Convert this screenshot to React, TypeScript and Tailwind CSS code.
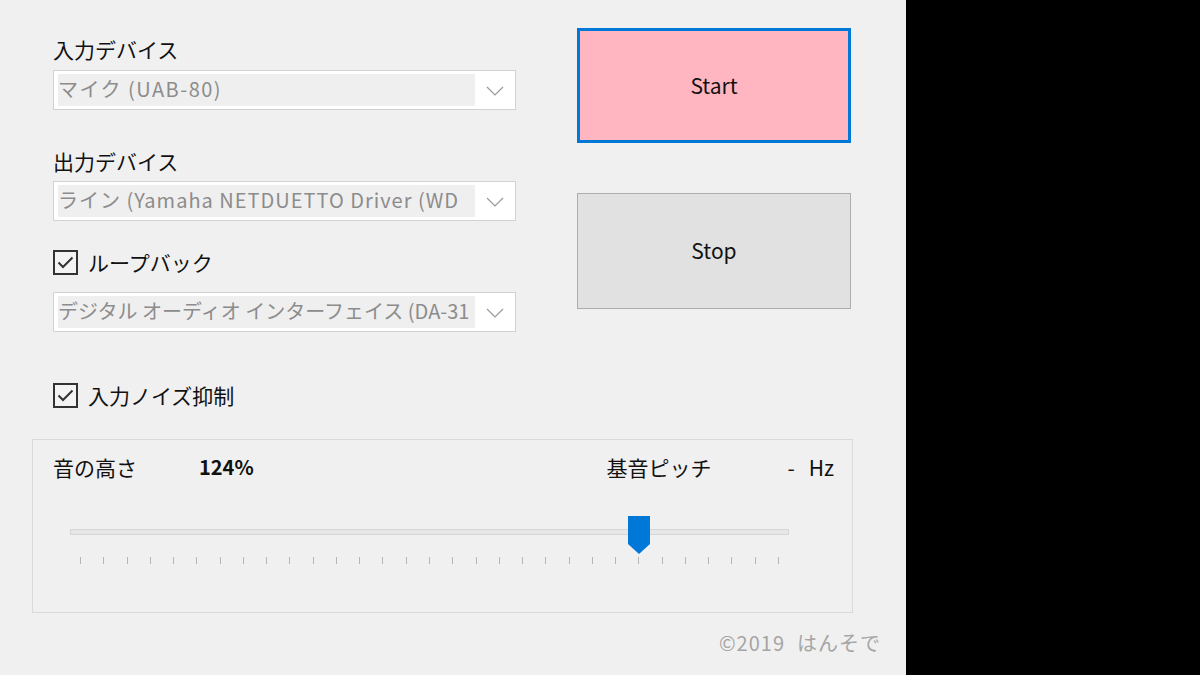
import React from 'react';

const FONT = '"Noto Sans CJK JP", "Liberation Sans", sans-serif';

function Chevron() {
  return (
    <svg width="18" height="10" viewBox="0 0 18 10">
      <polyline points="1,1 9,9 17,1" fill="none" stroke="#9a9a9a" strokeWidth="1.2" />
    </svg>
  );
}

function Combo({ value, track = 'tracking-[1.5px]' }: { value: string; track?: string }) {
  return (
    <div className="h-[40px] w-[463px] flex items-center bg-white border border-[#d2d2d2] pl-[4px]">
      <div className={`h-[32px] w-[417px] bg-[#efefef] whitespace-nowrap flex items-center pb-[2px] text-[20px] ${track} text-[#8c8c8c] leading-none`}>
        {value}
      </div>
      <div className="flex-1 flex justify-center items-center pt-[2px]">
        <Chevron />
      </div>
    </div>
  );
}

function CheckRow({ label }: { label: string }) {
  return (
    <div className="h-[30px] flex items-center gap-[10px]">
      <div className="w-[25px] h-[25px] border-[2px] border-[#333333] bg-[#f4f4f4] flex items-center justify-center">
        <svg width="17" height="13" viewBox="0 0 17 13">
          <polyline points="1.5,6.5 6,11 15.5,1.5" fill="none" stroke="#333333" strokeWidth="2" />
        </svg>
      </div>
      <span className="text-[21px] text-[#111111] leading-none">{label}</span>
    </div>
  );
}

function Slider() {
  const ticks = Array.from({ length: 31 }, (_, i) => i);
  return (
    <div className="relative ml-[37px] w-[719px] h-[50px]">
      <div className="absolute left-0 right-0 top-[13px] h-[6px] bg-[#e7e7e7] border border-[#d6d6d6]" />
      <div className="absolute top-[41px] left-0 right-0 px-[10px] flex justify-between">
        {ticks.map((t) => (
          <div key={t} className="w-px h-[7px] bg-[#b5b5b5]" />
        ))}
      </div>
      <svg className="absolute top-0 left-[558px]" width="22" height="38" viewBox="0 0 22 38">
        <polygon points="0,0 22,0 22,28 11,38 0,28" fill="#0078d7" />
      </svg>
    </div>
  );
}

export default function App() {
  return (
    <div className="w-[1200px] h-[675px] flex bg-black overflow-hidden" style={{ fontFamily: FONT }}>
      <div className="w-[906px] h-full bg-[#f0f0f0] flex flex-col">
        {/* Top area */}
        <div className="flex items-start">
          <div className="ml-[53px] w-[463px] pt-[34px] flex flex-col">
            <div className="h-[30px] flex items-center text-[21px] text-[#111111] leading-none">入力デバイス</div>
            <div className="mt-[6px]">
              <Combo value="マイク (UAB-80)" />
            </div>
            <div className="mt-[36px] h-[30px] flex items-center text-[21px] text-[#111111] leading-none">出力デバイス</div>
            <div className="mt-[5px]">
              <Combo value="ライン (Yamaha NETDUETTO Driver (WD" track="tracking-[1px]" />
            </div>
            <div className="mt-[26px]">
              <CheckRow label="ループバック" />
            </div>
            <div className="mt-[15px]">
              <Combo value="デジタル オーディオ インターフェイス (DA-31" track="tracking-[0px]" />
            </div>
            <div className="mt-[48px]">
              <CheckRow label="入力ノイズ抑制" />
            </div>
          </div>

          <div className="ml-[61px] pt-[28px] flex flex-col">
            <button className="w-[274px] h-[115px] bg-[#ffb6c1] border-[3px] border-[#0078d7] text-[21px] text-[#111111]">
              Start
            </button>
            <button className="mt-[50px] w-[274px] h-[116px] bg-[#e1e1e1] border border-[#adadad] text-[21px] text-[#111111]">
              Stop
            </button>
          </div>
        </div>

        {/* Pitch group */}
        <div className="mt-[29px] ml-[32px] w-[821px] h-[174px] border border-[#dadada] flex flex-col">
          <div className="mt-[12px] h-[30px] flex items-center text-[21px] text-[#111111] leading-none">
            <span className="ml-[20px]">音の高さ</span>
            <span className="ml-[62px] font-bold text-[20px]">124%</span>
            <span className="ml-auto">基音ピッチ</span>
            <span className="ml-[76px]">-</span>
            <span className="ml-[14px] mr-[18px]">Hz</span>
          </div>
          <div className="mt-[34px]">
            <Slider />
          </div>
        </div>

        {/* Footer */}
        <div className="mt-[15px] h-[30px] flex items-center justify-end pr-[25px] text-[20px] tracking-[1px] text-[#a5a5a5] leading-none">
          <span>©2019</span>
          <span className="ml-[12px]">はんそで</span>
        </div>
      </div>
      <div className="flex-1" />
    </div>
  );
}
